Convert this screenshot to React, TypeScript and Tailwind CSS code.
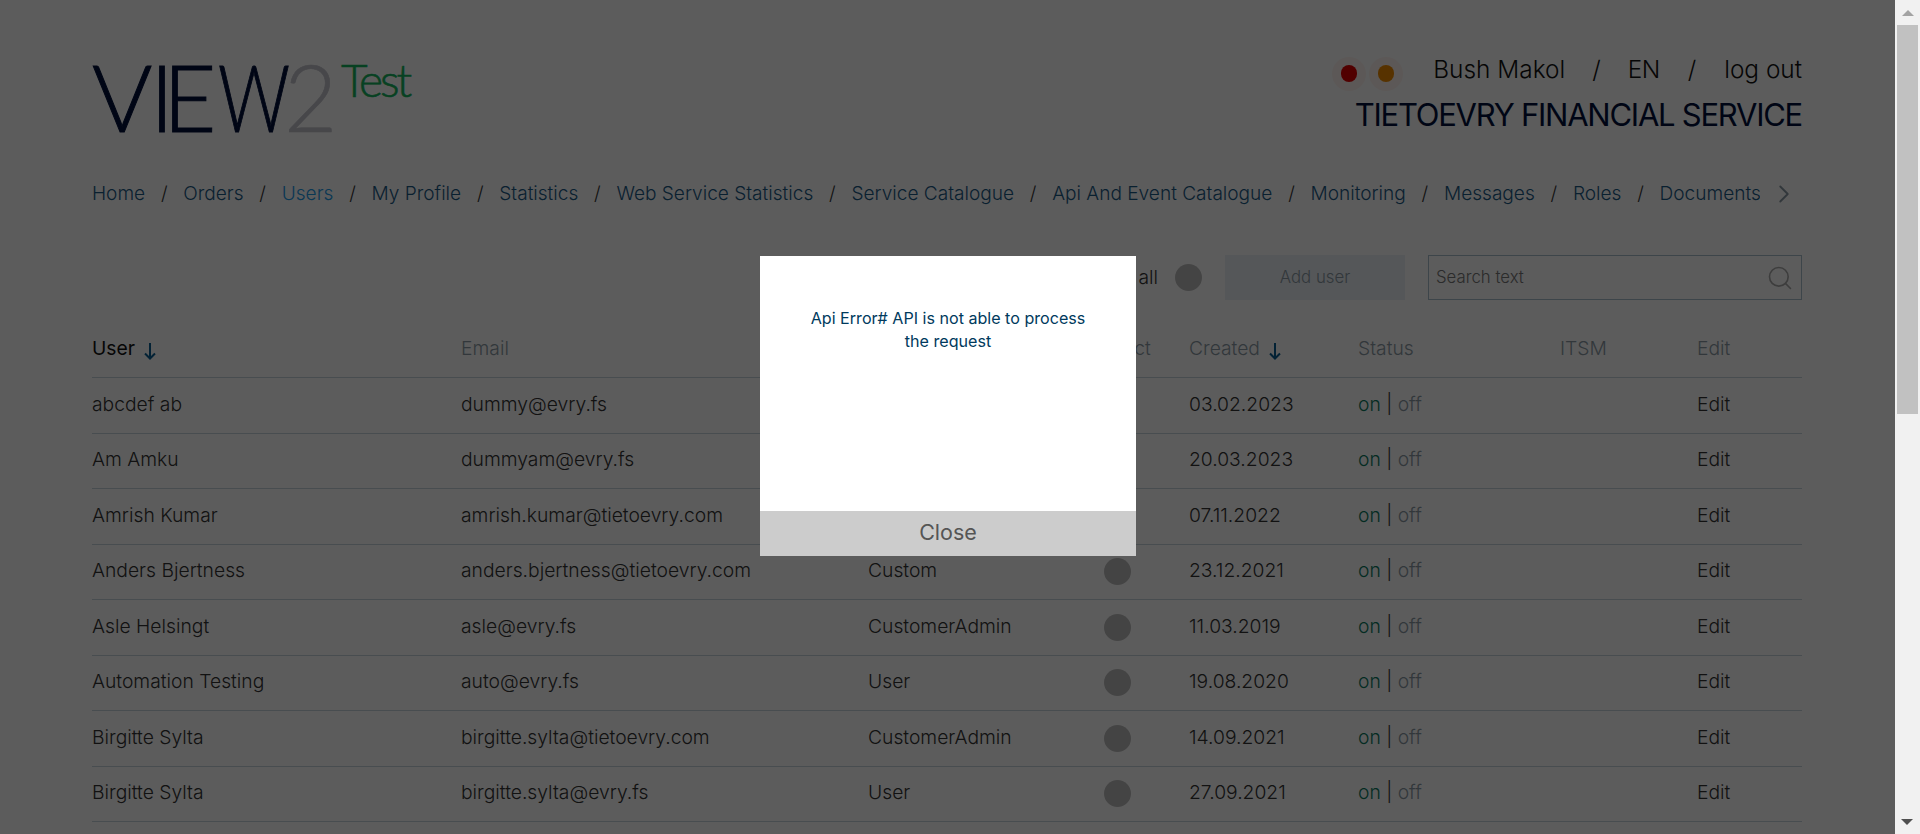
import { Search, ChevronRight } from 'lucide-react'

const navItems = ['Home', 'Orders', 'Users', 'My Profile', 'Statistics', 'Web Service Statistics', 'Service Catalogue', 'Api And Event Catalogue', 'Monitoring', 'Messages', 'Roles', 'Documents']

const users = [
  { name: 'abcdef ab', email: 'dummy@evry.fs', role: 'User', created: '03.02.2023' },
  { name: 'Am Amku', email: 'dummyam@evry.fs', role: 'User', created: '20.03.2023' },
  { name: 'Amrish Kumar', email: 'amrish.kumar@tietoevry.com', role: 'Custom', created: '07.11.2022' },
  { name: 'Anders Bjertness', email: 'anders.bjertness@tietoevry.com', role: 'Custom', created: '23.12.2021' },
  { name: 'Asle Helsingt', email: 'asle@evry.fs', role: 'CustomerAdmin', created: '11.03.2019' },
  { name: 'Automation Testing', email: 'auto@evry.fs', role: 'User', created: '19.08.2020' },
  { name: 'Birgitte Sylta', email: 'birgitte.sylta@tietoevry.com', role: 'CustomerAdmin', created: '14.09.2021' },
  { name: 'Birgitte Sylta', email: 'birgitte.sylta@evry.fs', role: 'User', created: '27.09.2021' },
]

const cols = 'grid grid-cols-[369px_407px_236px_85px_169px_202px_137px_105px]'

const SortArrow = () => (
  <svg width="14" height="18" viewBox="0 0 14 18" className="ml-2 mt-1" fill="none" stroke="#0a5f92" strokeWidth="2">
    <path d="M7 1v15M2 11.5L7 16.5L12 11.5" />
  </svg>
)

// Wordmark letters get fixed boxes, the W is squeezed to the logo's narrower shape
const Logo = () => (
  <div className="flex items-start h-[70px] font-['Lato',sans-serif] font-light leading-none">
    <div className="flex text-[92px] leading-[70px] text-[#00103a] [-webkit-text-stroke:1px_#00103a]">
      <span className="w-[58px]">V</span>
      <span className="w-[13px]">I</span>
      <span className="w-[55px]">E</span>
      <span className="w-[66px] origin-left scale-x-[.77]">W</span>
    </div>
    <span className="w-[57px] text-[92px] leading-[70px] text-[#c4c4cc] [-webkit-text-stroke:0.6px_#c4c4cc]">2</span>
    <span className="text-[46px] leading-[36px] tracking-[-3px] text-[#14b560] [-webkit-text-stroke:0.6px_#14b560]">Test</span>
  </div>
)

export default function App() {
  return (
    <div className="flex h-screen overflow-hidden bg-[#f1f1f1] font-['Inter',sans-serif] font-light text-[#333]">
      <main className="relative flex-1 overflow-hidden bg-white pl-[92px] pr-[93px]">
        <header className="flex justify-between pt-[62px] h-[170px]">
          <Logo />
          <div className="-mt-[11px] flex flex-col items-end">
            <div className="flex items-center h-[36px] text-[24.4px] text-[#111]">
              <span className="w-[34px] h-[34px] rounded-full bg-[#fff4f0] flex items-center justify-center mr-[3px] mt-[9px]">
                <span className="w-[16px] h-[17px] rounded-full bg-[#e00000]" />
              </span>
              <span className="w-[34px] h-[34px] rounded-full bg-[#fff4f0] flex items-center justify-center mt-[9px]">
                <span className="w-[16px] h-[17px] rounded-full bg-[#f08c00]" />
              </span>
              <span className="ml-[30px]">Bush Makol</span>
              <span className="mx-[27px]">/</span>
              <span className="tracking-[-0.5px]">EN</span>
              <span className="mx-[28px]">/</span>
              <span>log out</span>
            </div>
            <div className="mt-[9px] text-[31px] leading-[38px] font-normal tracking-[-1.25px] text-[#00103a]">TIETOEVRY FINANCIAL SERVICE</div>
          </div>
        </header>

        <nav className="flex items-center h-[48px]">
          <div className="flex w-[1668px] overflow-hidden whitespace-nowrap text-[19.08px] text-[#1b5a86]">
            {navItems.map((item, i) => (
              <span key={item} className="flex shrink-0">
                {i > 0 && <span className="mx-[15.75px] text-[#333]">/</span>}
                <span className={item === 'Users' ? 'text-[#1e9be8]' : ''}>{item}</span>
              </span>
            ))}
          </div>
          <ChevronRight className="ml-[9px] w-[30px] h-[30px] text-[#8a9aa5]" strokeWidth={1.5} />
        </nav>

        <div className="mt-[37px] flex justify-end items-center h-[45px]">
          <span className="text-[19.3px]">Show all</span>
          <span className="ml-[17px] w-[27px] h-[27px] rounded-full bg-[#bdbdbd]" />
          <button className="ml-[23px] w-[180px] h-[45px] bg-[#ecf1f5] text-[16.8px] text-[#8a9aa5]">Add user</button>
          <div className="ml-[23px] flex items-center justify-between w-[374px] h-[45px] border border-[#a8c0ce] pl-[7px] pr-[7px] text-[16.8px] text-[#777]">
            <span>Search text</span>
            <Search className="w-[28px] h-[28px] text-[#aaa]" strokeWidth={1.4} />
          </div>
        </div>

        <div className={`${cols} h-[78px] items-end pb-[14px] text-[19.3px] text-[#8b9aa5] border-b border-[#c8d4de]`}>
          <div className="flex items-center font-normal text-[#111]">User<SortArrow /></div>
          <div>Email</div>
          <div>Role</div>
          <div className="-ml-[6px]">Direct</div>
          <div className="flex items-center">Created<SortArrow /></div>
          <div>Status</div>
          <div>ITSM</div>
          <div>Edit</div>
        </div>

        {users.map((u, i) => (
          <div key={i} className={`${cols} h-[55.5px] pb-[2px] items-center text-[19.3px] border-b border-[#c8d4de]`}>
            <div>{u.name}</div>
            <div>{u.email}</div>
            <div>{u.role}</div>
            <div className="flex pt-[2px]"><span className="w-[27px] h-[27px] rounded-full bg-[#bdbdbd]" /></div>
            <div>{u.created}</div>
            <div><span className="text-[#0b7a5f]">on</span> | <span className="text-[#8b9aa5]">off</span></div>
            <div />
            <div>Edit</div>
          </div>
        ))}

        <div className="absolute inset-0 bg-[rgba(0,0,0,0.64)]" />

        <div className="absolute left-[760px] top-[256px] flex flex-col w-[376px] h-[300px] bg-white">
          <div className="flex-1 px-[40px] pt-[51px] text-center text-[16.1px] leading-[23px] font-normal text-[#003a5d]">
            Api Error# API is not able to process the request
          </div>
          <button className="h-[45px] pb-[2px] bg-[#cccccc] text-[21.5px] font-normal text-[#555]">Close</button>
        </div>
      </main>

      <aside className="relative w-[25px] shrink-0 bg-[#f1f1f1]">
        <div className="mx-auto mt-[10px] w-0 h-0 border-x-[6px] border-b-[6px] border-x-transparent border-b-[#a3a3a3]" />
        <div className="mx-[2px] mt-[9px] h-[389px] bg-[#c1c1c1]" />
        <div className="absolute bottom-[9px] left-[6px] w-0 h-0 border-x-[6px] border-t-[6px] border-x-transparent border-t-[#505050]" />
      </aside>
    </div>
  )
}
